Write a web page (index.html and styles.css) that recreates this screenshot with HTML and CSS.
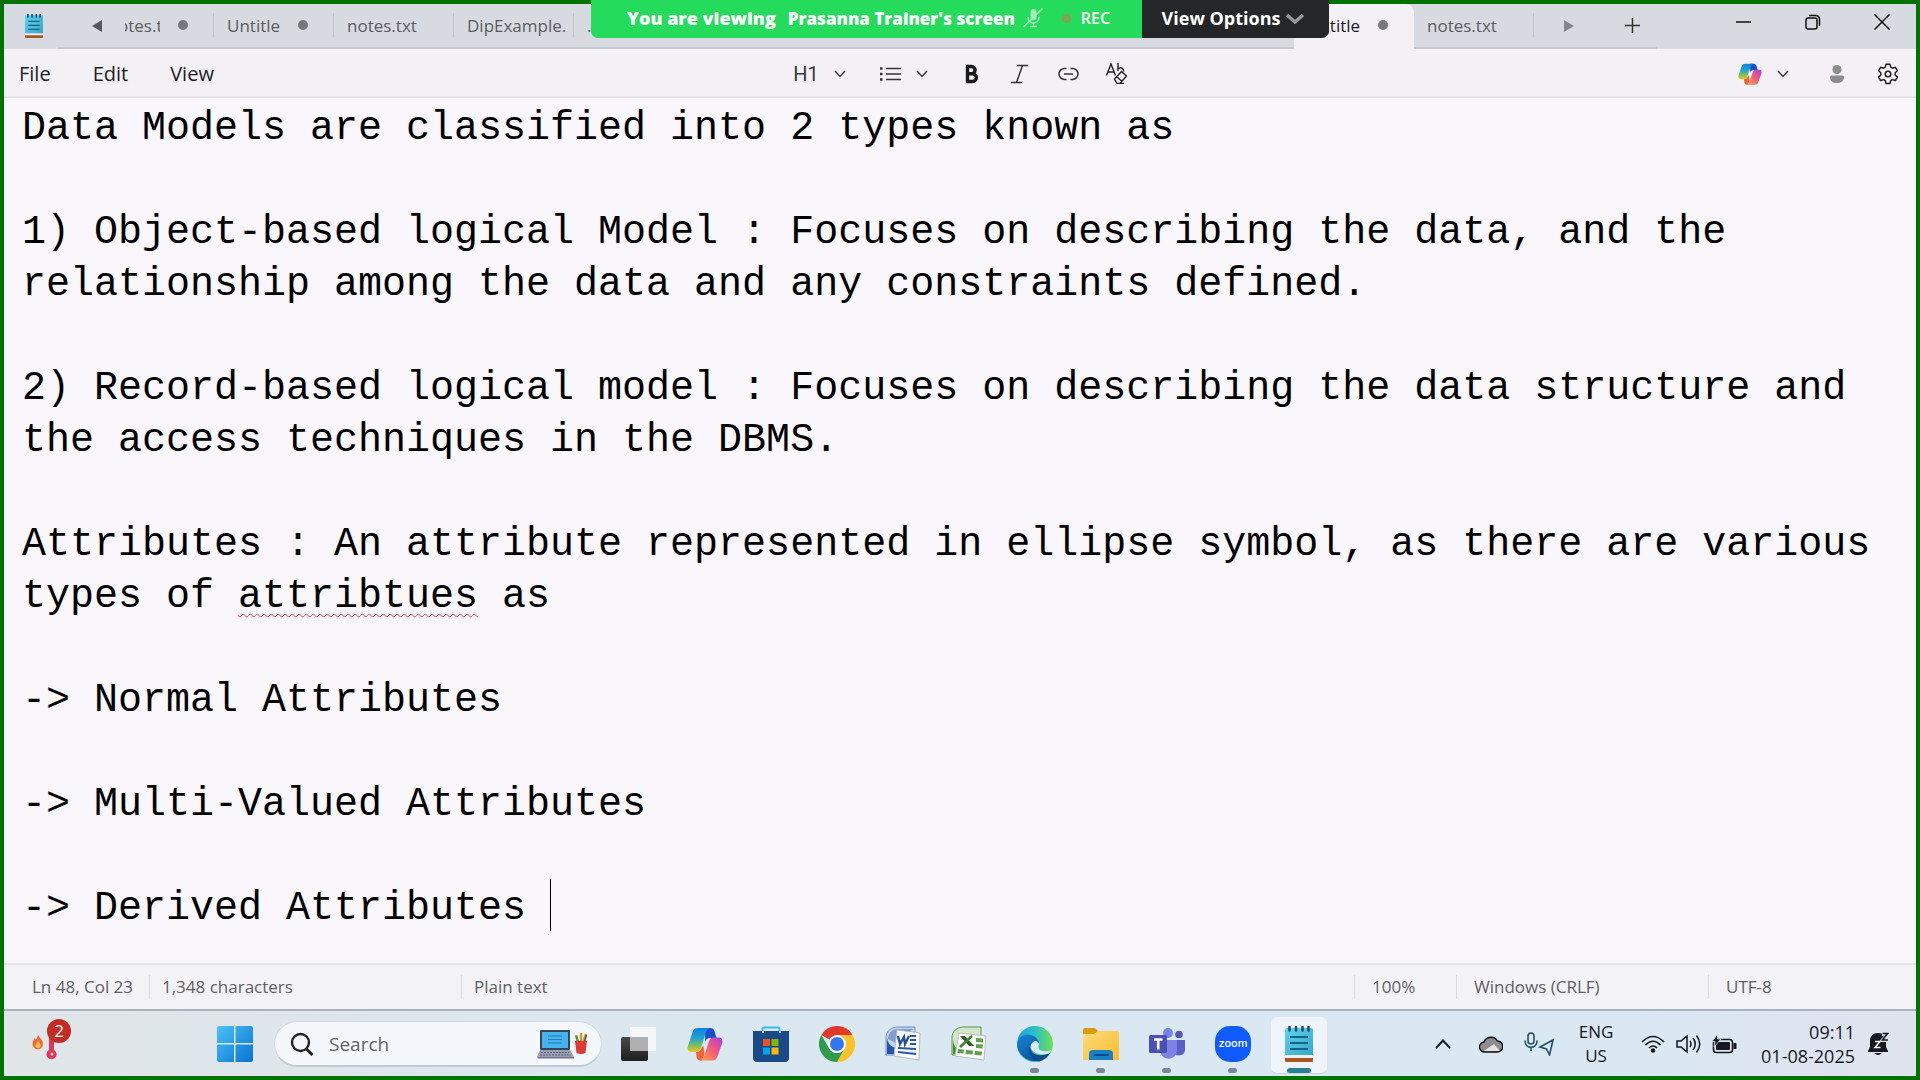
FILE: index.html
```html
<!DOCTYPE html>
<html lang="en">
<head>
<meta charset="utf-8">
<title>Untitled - Notepad</title>
<link rel="stylesheet" href="styles.css">
</head>
<body>
<svg class="defs" aria-hidden="true">
  <defs>
    <linearGradient id="cpA" x1="0" y1="0" x2="0" y2="1"><stop offset="0" stop-color="#0a84dc"/><stop offset=".4" stop-color="#22a0d8"/><stop offset=".7" stop-color="#6fbf62"/><stop offset="1" stop-color="#f0c71e"/></linearGradient>
    <linearGradient id="cpB" x1="1" y1="0" x2="0" y2="1"><stop offset="0" stop-color="#a53ee0"/><stop offset=".45" stop-color="#f0587f"/><stop offset="1" stop-color="#ffa04a"/></linearGradient>
    <linearGradient id="npG" x1="0" y1="0" x2="1" y2="1"><stop offset="0" stop-color="#5fd3ef"/><stop offset="1" stop-color="#38a5c6"/></linearGradient>
    <linearGradient id="winG" x1="0" y1="0" x2="1" y2="1"><stop offset="0" stop-color="#4cc2f8"/><stop offset="1" stop-color="#0672d2"/></linearGradient>
    <linearGradient id="edG" x1="0" y1="0" x2="1" y2="0"><stop offset="0" stop-color="#1f9fe0"/><stop offset=".5" stop-color="#2cc0c8"/><stop offset="1" stop-color="#6fe04a"/></linearGradient>
    <linearGradient id="edB" x1="0" y1="0" x2="1" y2="1"><stop offset="0" stop-color="#1388dc"/><stop offset="1" stop-color="#0c3f80"/></linearGradient>
    <linearGradient id="foG" x1="0" y1="0" x2="1" y2="1"><stop offset="0" stop-color="#ffdc7c"/><stop offset="1" stop-color="#fcbc2c"/></linearGradient>
    <linearGradient id="tvG" x1="0" y1="0" x2="0" y2="1"><stop offset="0" stop-color="#484848"/><stop offset="1" stop-color="#1e1e1e"/></linearGradient>
    <symbol id="chev" viewBox="0 0 12 8"><path d="M1 1l5 5.5L11 1" fill="none" stroke="currentColor" stroke-width="1.5"/></symbol>
    <symbol id="copilot" viewBox="0 0 36 34">
      <path d="M18 1h5.500c2 0 3.200 1 3.900 3l2.200 7h-6.500c-3 0-4 1.500-5 4z" fill="#1b4fd0"/>
      <path d="M10.500 1h12.500c-2.500.5-3.500 2.500-4.300 5l-5 16c-.8 2-2 3-4.500 3H4.500C1 25 0 22.500.8 19.500L5.500 5C6.400 2.300 8 1 10.500 1z" fill="url(#cpA)"/>
      <path d="M9 25c3.500 0 5-2 6-5l1.500-1 1 8-2.500 6.500h-1.500c-2 0-3.200-1-3.900-3z" fill="#f0643c"/>
      <path d="M25.500 33.500H13c2.500-.5 3.500-2.500 4.300-5l5-15c.8-2 2-3 4.500-3h4.700c3.500 0 4.500 2.500 3.700 5.500l-4.700 13.500c-.9 2.700-2.500 4-5 4z" fill="url(#cpB)"/>
    </symbol>
    <symbol id="notepad" viewBox="0 0 28 36">
      <path d="M0 4a2 2 0 0 1 2-2h24a2 2 0 0 1 2 2v26H0z" fill="url(#npG)"/>
      <path d="M0 29h28v3H0z" fill="#eef2f4"/><path d="M0 32h28v3a1 1 0 0 1-1 1H1a1 1 0 0 1-1-1z" fill="#a9561f"/>
      <path d="M5 11h18M5 17h18M5 23h18" stroke="#0f6787" stroke-width="2"/>
      <path d="M4.500 1v3.500M11 1v3.500M17.500 1v3.500M23.500 1v3.500" stroke="#16506c" stroke-width="2.600" stroke-linecap="round"/>
    </symbol>
  </defs>
</svg>

<div class="desktop">
  <header class="titlebar">
    <div class="app-mark"><svg width="18" height="24" viewBox="0 0 28 36" preserveAspectRatio="none"><use href="#notepad"/></svg></div>
    <nav class="strip" aria-label="Open files">
      <button class="scroll-left" aria-label="Scroll tabs left"><svg width="10" height="12" viewBox="0 0 10 12"><path d="M10 0v12L0 6z" fill="#56575c"/></svg></button>
      <div class="tabs">
        <button class="tab tab-cut"><span class="name name-tail">notes.txt</span><i class="dot"></i></button>
        <button class="tab"><span class="name name-short">Untitled</span><i class="dot"></i></button>
        <button class="tab"><span class="name">notes.txt</span></button>
        <button class="tab"><span class="name">DipExample.</span></button>
        <button class="tab"><span class="name">.</span></button>
        <button class="tab" aria-label="Tab 6"></button>
        <button class="tab" aria-label="Tab 7"></button>
        <button class="tab" aria-label="Tab 8"></button>
        <button class="tab" aria-label="Tab 9"></button>
        <button class="tab" aria-label="Tab 10"></button>
        <button class="tab tab-active"><span class="name name-short">Untitled</span><i class="dot"></i></button>
        <button class="tab"><span class="name">notes.txt</span></button>
      </div>
      <button class="scroll-right" aria-label="Scroll tabs right"><svg width="10" height="12" viewBox="0 0 10 12"><path d="M0 0l10 6L0 12z" fill="#85868b"/></svg></button>
      <button class="new-tab" aria-label="New tab"><svg width="15" height="15" viewBox="0 0 15 15"><path d="M7.500 0v15M0 7.500h15" stroke="#333" stroke-width="1.500"/></svg></button>
    </nav>
    <div class="controls">
      <button aria-label="Minimize"><svg width="16" height="16" viewBox="0 0 16 16"><path d="M0 8h15" stroke="#111" stroke-width="1.500"/></svg></button>
      <button aria-label="Restore"><svg width="16" height="16" viewBox="0 0 16 16" fill="none" stroke="#111" stroke-width="1.500"><rect x="1" y="4" width="11" height="11" rx="2"/><path d="M4 1.500h7a3.500 3.500 0 0 1 3.500 3.500v7"/></svg></button>
      <button aria-label="Close"><svg width="16" height="16" viewBox="0 0 16 16"><path d="M.5.500l15 15M15.500.5l-15 15" stroke="#111" stroke-width="1.500"/></svg></button>
    </div>
  </header>

  <div class="toolbar">
    <nav class="menu" aria-label="Menu"><button>File</button><button>Edit</button><button>View</button></nav>
    <div class="format">
      <button class="drop"><span class="heading">H1</span><svg width="12" height="8"><use href="#chev"/></svg></button>
      <button class="drop" aria-label="List"><svg width="21" height="14" viewBox="0 0 21 14"><path d="M6 1.500h15M6 7h15M6 12.500h15" stroke="#333" stroke-width="1.500"/><path d="M0 1.500h2.500M0 7h2.500M0 12.500h2.500" stroke="#333" stroke-width="2.500"/></svg><svg width="12" height="8"><use href="#chev"/></svg></button>
      <div class="styles">
        <button aria-label="Bold"><svg width="21" height="20" viewBox="0 0 21 20"><path d="M5.500 2.500h4a3.600 3.600 0 0 1 0 7.200h-4zM5.500 9.700h5a3.900 3.900 0 0 1 0 7.800h-5z" fill="none" stroke="#1a1a1a" stroke-width="3.400" stroke-linejoin="round"/></svg></button>
        <button aria-label="Italic"><svg width="21" height="20" viewBox="0 0 21 20"><path d="M7 1.500h11M1 18.500h11M12.500 1.500l-6 17" fill="none" stroke="#333" stroke-width="1.500"/></svg></button>
        <button aria-label="Link"><svg width="21" height="14" viewBox="0 0 21 14"><path d="M8.500 1.500h-2a5.500 5.500 0 0 0 0 11h2M12.500 1.500h2a5.500 5.500 0 0 1 0 11h-2M6 7h9" fill="none" stroke="#333" stroke-width="1.500"/></svg></button>
        <button aria-label="Clear formatting"><svg width="21" height="21" viewBox="0 0 21 21"><path d="M.5 12.500L5 1l4.500 11.500M2 9h6M12 0v8M12 6c3-3 6 0 5.500 2.500M8.500 16l7-7.500 5 4.500-6.500 7.500H11zM10.500 13.500l5 4.500M11 20.500h7" fill="none" stroke="#222" stroke-width="1.400"/></svg></button>
      </div>
    </div>
    <div class="account">
      <button class="drop-tight" aria-label="Copilot"><svg width="24" height="22" viewBox="0 0 36 34" preserveAspectRatio="none"><use href="#copilot"/></svg><svg width="12" height="8"><use href="#chev"/></svg></button>
      <button class="person" aria-label="Account"><svg width="14" height="18" viewBox="0 0 14 18"><circle cx="7" cy="4.500" r="4.500" fill="#8c8c8f"/><path d="M0 12a1.500 1.500 0 0 1 1.500-1.500h11A1.500 1.500 0 0 1 14 12c0 4-3 6-7 6s-7-2-7-6z" fill="#8c8c8f"/></svg></button>
      <button aria-label="Settings"><svg width="22" height="22" viewBox="0 0 22 22" fill="none" stroke="#222" stroke-width="1.500"><path d="M9 1.200h4l.7 3 1.800 1 2.900-.9 2 3.400-2.200 2.100v2.200l2.200 2.100-2 3.400-2.900-.9-1.800 1-.7 3H9l-.7-3-1.800-1-2.900.9-2-3.400 2.200-2.100V9.800L1.600 7.700l2-3.400 2.900.9 1.800-1z" stroke-linejoin="round"/><circle cx="11" cy="11" r="2.800"/></svg></button>
    </div>
  </div>

  <main class="editor" role="textbox" aria-multiline="true" aria-label="Text editor" contenteditable="true" spellcheck="false"><p>Data Models are classified into 2 types known as</p><p><br></p><p>1) Object-based logical Model : Focuses on describing the data, and the relationship among the data and any constraints defined.</p><p><br></p><p>2) Record-based logical model : Focuses on describing the data structure and the access techniques in the DBMS.</p><p><br></p><p>Attributes : An attribute represented in ellipse symbol, as there are various types of <span class="typo">attribtues</span> as</p><p><br></p><p>-&gt; Normal Attributes</p><p><br></p><p>-&gt; Multi-Valued Attributes</p><p><br></p><p>-&gt; Derived Attributes <span class="caret"></span></p></main>

  <footer class="status">
    <span class="cell cell-pos">Ln 48, Col 23</span>
    <span class="cell cell-count">1,348 characters</span>
    <span class="cell cell-kind">Plain text</span>
    <span class="cell cell-zoom">100%</span>
    <span class="cell cell-eol">Windows (CRLF)</span>
    <span class="cell cell-enc">UTF-8</span>
  </footer>

  <div class="taskbar">
    <button class="widgets" aria-label="Weather">
      <svg width="26" height="30" viewBox="0 0 26 30"><path d="M6 4c1 2 5 5 5 9a5 5 0 0 1-10.500 0c0-3 1.500-4 2-6l1.500 1.500C5 7 5.500 6 6 4z" fill="#ee6a35"/><path d="M6 10c2 2 2.500 3 2.500 4.500a2.500 2.500 0 0 1-5 0C3.500 13 5 12 6 10z" fill="#ffc04a"/><path d="M17 0h5v19a5 5 0 1 1-5 0z" fill="#df3558"/><circle cx="20" cy="23" r="1.500" fill="#ffc9d2"/></svg>
      <span class="badge">2</span>
    </button>
    <button class="start" aria-label="Start"><svg width="36" height="36" viewBox="0 0 36 36"><path d="M2 0h15v17H0V2a2 2 0 0 1 2-2zM18.500 0H34a2 2 0 0 1 2 2v15H18.500zM0 18.500h17V36H2a2 2 0 0 1-2-2zM18.500 18.500H36V34a2 2 0 0 1-2 2H18.500z" fill="url(#winG)"/></svg></button>
    <label class="search">
      <svg width="24" height="24" viewBox="0 0 24 24"><circle cx="10.500" cy="10.500" r="8.500" fill="none" stroke="#222" stroke-width="2.400"/><path d="M16.500 17l6 6" stroke="#222" stroke-width="3"/></svg>
      <input type="text" placeholder="Search" aria-label="Search">
      <svg width="50" height="30" viewBox="0 0 50 30"><rect x="3" y="1" width="30" height="20" rx="1" fill="#33475c"/><rect x="5" y="3" width="26" height="16" fill="#47b3ec"/><path d="M11 7h14M11 10.500h14M11 14h14" stroke="#1f7fbd" stroke-width="1.200"/><path d="M3 21h30l4 7H0z" fill="#9c9fb2"/><path d="M4 23.500h28M3 26h31" stroke="#60637a" stroke-width="1" stroke-dasharray="2 1"/><path d="M0 28h37v1.500H1z" fill="#6f7290"/><path d="M41 14l-2-8M44 14V4M46 14l3-9" stroke-width="2.400" stroke="#d29a2c"/><path d="M41 14l-1.500-7" stroke="#3a9b56" stroke-width="2"/><path d="M47 14l2.500-8" stroke="#4d5566" stroke-width="1.500"/><path d="M38 12h12l-1.500 12q-4.500 2-9 0z" fill="#dd3b34"/></svg>
    </label>
    <nav class="apps" aria-label="Apps">
      <button class="app" aria-label="Task view"><svg width="36" height="36" viewBox="0 0 36 36"><rect x="0" y="11" width="27" height="24" rx="2" fill="url(#tvG)"/><rect x="9" y="1" width="26" height="24" rx="1" fill="#f7f7f8" opacity=".9"/><path d="M9 11h18v14H9z" fill="#b0b0b0"/></svg></button>
      <button class="app" aria-label="Copilot"><svg width="36" height="34"><use href="#copilot"/></svg></button>
      <button class="app" aria-label="Microsoft Store"><svg width="36" height="36" viewBox="0 0 36 36"><path d="M9.500 7V3a1.500 1.500 0 0 1 1.500-1.500h14A1.500 1.500 0 0 1 26.500 3v4" fill="none" stroke="#3cb8e6" stroke-width="2"/><path d="M0 5h36v27a4 4 0 0 1-4 4H4a4 4 0 0 1-4-4z" fill="#174a86"/><path d="M9 6h2M26 6h2" stroke="#8de0f8" stroke-width="2"/><path d="M10 13h7v7h-7z" fill="#f25022"/><path d="M18.500 13h7v7h-7z" fill="#7fba00"/><path d="M10 21.500h7v7h-7z" fill="#00a4ef"/><path d="M18.500 21.500h7v7h-7z" fill="#ffb900"/></svg></button>
      <button class="app" aria-label="Chrome"><svg width="36" height="36" viewBox="0 0 36 36"><path d="M18 18L2.400 9A18 18 0 0 1 33.600 9z" fill="#e2382c"/><path d="M18 9h15.600A18 18 0 0 1 18 36l8-13.500z" fill="#fdc224"/><path d="M2.400 9l7.800 13.500a9 9 0 0 0 15.600 0L18 36A18 18 0 0 1 2.400 9z" fill="#2f9c4c"/><circle cx="18" cy="18" r="9" fill="#fff"/><circle cx="18" cy="18" r="7" fill="#3278ea"/></svg></button>
      <button class="app" aria-label="Word"><svg width="36" height="36" viewBox="0 0 36 36"><path d="M1 29V12C1 5 6 1 13 1h17v28z" fill="#c6d2e6" stroke="#6f8fc4"/><path d="M2 28V12q1 9 10 10l-3 6z" fill="#2756a8"/><path d="M3 13C3 6 8 3 14 3h14L11 17z" fill="#7f9dce"/><path d="M12 4l23 3-1 27-25-4z" fill="#fff" stroke="#b5bac4"/><path d="M13 10l2 8 4-7 1 7 4-8" fill="none" stroke="#2a4f9c" stroke-width="2.400"/><path d="M25 10h6M25 14h6M25 18h6M13 22l18 1M13 26l18 2" stroke="#2a56a8" stroke-width="2"/></svg></button>
      <button class="app" aria-label="Excel"><svg width="36" height="36" viewBox="0 0 36 36"><path d="M1 29V12C1 5 6 1 13 1h17v28z" fill="#d6e4cc" stroke="#5c9640"/><path d="M2 28V14q1 8 6 10l-3 4z" fill="#3a9134"/><path d="M8 7l27 3-2 24-29-4z" fill="#fff" stroke="#b5bfb2"/><path d="M25 12l7 .5v4l-7-.5zM25 18l7 .5-.5 4-6.500-.5zM24 25l7 .5-.5 4-7-.5zM15 24l7 .5-.5 4-7-.5zM7 23l6 .5-.5 4-6-.5z" fill="#5ea04e"/><path d="M9 10h5l9 10h-5z" fill="#285e20"/><path d="M21 10L9 21" stroke="#3f7f31" stroke-width="2.600"/></svg></button>
      <button class="app running" aria-label="Edge"><svg width="36" height="36" viewBox="0 0 36 36"><circle cx="18" cy="18" r="18" fill="url(#edG)"/><path d="M0 18C1 10 8 8 13 9c6 1 9 5 9 9-3-4-9-2-9 4 0 6 5 10 11 9 4 0 7-2 9-4A18 18 0 0 1 0 18z" fill="url(#edB)"/><path d="M13 20c0 8 8 12 20 7a18 18 0 0 1-11 8.500C14 34 10 26 13 20z" fill="#114a8c"/><path d="M14 19c2-5 7-5 8-1-1 3-1 6 4 7 3 .6 6 0 8-1l-1 3c-5 2-12 2-16-1q-4-3-3-7z" fill="#dce9f3"/></svg></button>
      <button class="app running" aria-label="File Explorer"><svg width="36" height="36" viewBox="0 0 36 36"><path d="M0 4a2 2 0 0 1 2-2h10l4 4-4 4H0z" fill="#dc9a10"/><path d="M0 8h11l4-3h19a2 2 0 0 1 2 2v27H0z" fill="url(#foG)"/><path d="M6 34v-6a4 4 0 0 1 4-4h16a4 4 0 0 1 4 4v6z" fill="#1b7fc4"/><path d="M12 29h13" stroke="#0c4c84" stroke-width="2" stroke-linecap="round"/></svg></button>
      <button class="app running" aria-label="Teams"><svg width="36" height="36" viewBox="0 0 36 36"><circle cx="19" cy="7" r="5" fill="#7a80ea"/><circle cx="30" cy="8.500" r="3.800" fill="#5157bd"/><path d="M26 14h10v10a6 6 0 0 1-10 4z" fill="#5a5fc6"/><path d="M12 14h16v11a8.500 8.500 0 0 1-16 3z" fill="#7d82e4"/><rect x="0" y="9" width="18" height="18" rx="1.500" fill="#4a50b4"/><path d="M5 13.500h8.500M9.200 13.500v10" stroke="#fff" stroke-width="2.600"/></svg></button>
      <button class="app running" aria-label="Zoom"><span class="zoom-mark">zoom</span></button>
      <button class="app running current" aria-label="Notepad"><svg width="28" height="36"><use href="#notepad"/></svg></button>
    </nav>
    <div class="tray">
      <button class="tray-item" aria-label="Show hidden icons"><svg width="16" height="10" viewBox="0 0 16 10"><path d="M1 9l7-7.500L15 9" fill="none" stroke="#1a1f26" stroke-width="2"/></svg></button>
      <button class="tray-item" aria-label="OneDrive"><svg width="24" height="18" viewBox="0 0 24 18"><path d="M6 17a5 5 0 0 1-1-10 7.500 7.500 0 0 1 13.500-1A5.500 5.500 0 0 1 18 17z" fill="#8d8d90"/><path d="M4 16.500L15 9l6 7z" fill="#e3e3e5"/><path d="M6 17a5 5 0 0 1-1-10 7.500 7.500 0 0 1 13.500-1A5.500 5.500 0 0 1 18 17z" fill="none" stroke="#111" stroke-width="1.400"/></svg></button>
      <button class="tray-item" aria-label="Microphone and location in use"><svg width="30" height="24" viewBox="0 0 30 24" fill="none" stroke="#225163" stroke-width="1.600"><rect x="4" y="1" width="6" height="11" rx="3"/><path d="M1 8.500c0 9 12 9 12 0M7 15.500V19M16 15l13-7-3.500 15-3-6z"/></svg></button>
      <button class="lang">ENG<br>US</button>
      <button class="signals" aria-label="Network, volume, battery">
        <svg width="24" height="18" viewBox="0 0 24 18" fill="none" stroke="#15191f" stroke-width="1.600"><path d="M1 7q11-11 22 0M4.500 10q7.500-7.500 15 0M8 13q4-4 8 0"/><circle cx="12" cy="15.500" r="1.500" fill="#15191f"/></svg>
        <svg width="25" height="20" viewBox="0 0 25 20" fill="none" stroke="#15191f" stroke-width="1.500"><path d="M1 7v6h4l6 5V2L5 7zM14 7q2 3 0 6M17 4q4.500 6 0 12M20.500 1.500q6.500 8.500 0 17"/></svg>
        <svg width="25" height="20" viewBox="0 0 25 20"><rect x="1.500" y="5.500" width="19" height="13" rx="3" fill="none" stroke="#15191f" stroke-width="1.600"/><rect x="4" y="8" width="14" height="8" rx="1" fill="#15191f"/><path d="M21.500 9h2a1 1 0 0 1 1 1v4a1 1 0 0 1-1 1h-2z" fill="#15191f"/><path d="M5.500 0L0 7.500h3L2 13l7-8H5.500z" fill="#15191f" stroke="#dbe8f2" stroke-width=".8"/></svg>
      </button>
      <button class="clock">09:11<br>01-08-2025</button>
      <button class="bell" aria-label="Do not disturb"><svg width="22" height="24" viewBox="0 0 22 24"><path d="M10 1c5 0 8 3.500 8 8v6l2 4v1H0v-1l2-4V9c0-4.500 3-8 8-8z" fill="#15191f"/><path d="M6 21h8q-4 4-8 0z" fill="#15191f"/><path d="M7 9.500h5l-5 6h5.500" fill="none" stroke="#fff" stroke-width="1.500"/><path d="M14 2h6l-5 6h6" fill="none" stroke="#dde6f1" stroke-width="4"/><path d="M14.500 1.500h5l-5 6.500H20" fill="none" stroke="#15191f" stroke-width="1.600"/></svg></button>
    </div>
  </div>

  <div class="share">
    <div class="share-info"><strong>You are viewing</strong><strong class="sharer">Prasanna Trainer's screen</strong>
      <svg width="20" height="20" viewBox="0 0 20 20" fill="none" stroke="#a2efb9" stroke-width="1.600"><rect x="7.500" y="1" width="6" height="11" rx="3" fill="#a2efb9" stroke="none"/><path d="M5 9c0 8 11 8 11 0M10.500 15v3.500M7 18.500h7M19.500.5L.5 19"/></svg>
      <i class="rec-dot"></i><span class="rec">REC</span></div>
    <button class="share-options">View Options<svg width="20" height="11" viewBox="0 0 20 11"><path d="M2 2l8 7 8-7" fill="none" stroke="#97989a" stroke-width="3.500"/></svg></button>
  </div>
</div>
</body>
</html>
```
FILE: styles.css
```css
* { box-sizing: border-box; }
body { margin: 0; font: 17px "Open Sans", "Liberation Sans", sans-serif; color: #1c1c1e; }
button { margin: 0; padding: 0; border: 0; background: none; color: inherit; font: inherit; display: flex; align-items: center; justify-content: center; flex: none; }
svg { flex: none; display: block; }
.defs { position: absolute; width: 0; height: 0; }
.desktop { position: relative; display: flex; flex-direction: column; min-height: 100vh; border: 4px solid #007200; background: #f9f7fb; }

.titlebar { display: flex; height: 45px; background: #d8dae2; color: #5b5c61; }
.app-mark { width: 54px; display: flex; align-items: center; justify-content: center; padding: 0 0 2px 6px; }
.strip { flex: 1; min-width: 0; display: flex; border-bottom: 2px solid #c8cad1; }
.scroll-left { width: 60px; padding-left: 17px; }
.scroll-right { width: 70px; }
.new-tab { width: 53px; padding-left: 3px; }
.tabs { flex: 1; min-width: 0; display: flex; }
.tab { position: relative; flex: 1 1 120px; min-width: 0; justify-content: flex-start; padding: 0 6px 0 13px; }
.tab::after { content: ""; position: absolute; right: 0; top: 9px; width: 1px; height: 24px; background: #c2c4cb; }
.tab-cut { flex: 0 0 96px; padding-left: 7px; }
.name { overflow: hidden; white-space: nowrap; line-height: 24px; }
.name-short { width: 53px; }
.name-tail { width: 35px; display: flex; justify-content: center; }
.dot { position: absolute; right: 26px; top: 16px; width: 10px; height: 10px; border-radius: 50%; background: #77787d; }
.tab-active { background: #f3f1f6; color: #1c1c1e; margin-bottom: -2px; padding-bottom: 2px; border-radius: 0 8px 0 0; }
.tab-active::after { display: none; }
.controls { display: flex; margin-left: 52px; padding-bottom: 9px; }
.controls button { width: 69px; }

.toolbar { display: grid; grid-template-columns: 1fr auto 1fr; height: 49px; padding-top: 2px; background: #f3f1f6; border-bottom: 2px solid #e6e4e9; color: #3a3a3d; }
.menu { display: flex; gap: 42px; padding-left: 15px; font-size: 20px; color: #1c1c1e; }
.format { display: flex; gap: 34px; }
.drop { gap: 15px; }
.heading { font: 20px Roboto, "Liberation Sans", sans-serif; }
.styles { display: flex; gap: 27px; }
.account { display: flex; justify-content: flex-end; padding-right: 17px; }
.drop-tight { gap: 15px; margin-right: 41px; }
.person { margin-right: 33px; }

.editor { flex: 1; padding: 5px 18px 16px; outline: 0; font: 40px/52px "Liberation Mono", "DejaVu Sans Mono", monospace; color: #000; white-space: pre-wrap; }
.editor p { margin: 0; }
.typo { text-decoration: underline wavy #f0343c 1px; text-underline-offset: 6px; text-decoration-skip-ink: none; }
.caret { display: inline-block; width: 1px; height: 52px; margin-top: -5px; vertical-align: -12px; background: #000; }

.status { display: flex; height: 46px; padding-left: 28px; align-items: center; background: #f3f3f5; border-top: 2px solid #e4e4e8; color: #606064; }
.cell { line-height: 24px; white-space: nowrap; }
.cell + .cell { border-left: 1px solid #dcdce0; padding-left: 12px; }
.cell-pos { width: 117px; }
.cell-count { width: 312px; }
.cell-kind { flex: 1; }
.status .cell-zoom { width: 102px; padding-left: 17px; }
.status .cell-eol { width: 252px; padding-left: 17px; }
.status .cell-enc { width: 208px; padding-left: 17px; }

.taskbar { display: flex; height: 67px; border-top: 2px solid #abb4be; background: linear-gradient(90deg, #e0e5e8 0, #dde7ee 25%, #d9e8f2 50%, #dae8f3 85%, #e0e3ee 100%); }
.widgets { position: relative; width: 88px; justify-content: flex-start; padding: 4px 0 0 28px; }
.badge { position: absolute; left: 43px; top: 8px; width: 24px; height: 24px; border-radius: 50%; background: #c42b23; color: #fff; font-size: 17px; line-height: 24px; text-align: center; }
.start { width: 56px; margin-left: 115px; }
.search { display: flex; align-items: center; width: 328px; height: 46px; margin: 10px 4px 0 11px; padding: 0 14px 0 15px; border-radius: 23px; background: #f4f8fc; border: 1px solid #d3dae2; border-bottom: 2px solid #c3cad2; }
.search input { flex: 1; min-width: 0; margin: 0; padding: 0 0 0 15px; border: 0; outline: 0; background: none; font: 19px "Open Sans", "Liberation Sans", sans-serif; color: #55585c; }
.search input::placeholder { color: #606366; opacity: 1; }
.apps { display: flex; }
.app { position: relative; width: 66px; }
.app svg, .zoom-mark { position: relative; }
.running::after { content: ""; position: absolute; bottom: 3px; left: 28px; width: 9px; height: 5px; border-radius: 3px; background: #7b8690; }
.current::before { content: ""; position: absolute; left: 5px; top: 6px; width: 56px; height: 56px; border-radius: 6px; background: #eef4fa; border-bottom: 1px solid #ccd5dd; }
.current::after { left: 21px; width: 24px; background: #2c7f93; }
.zoom-mark { width: 36px; height: 36px; border-radius: 15px; background: #0f5bff; color: #fff; font: 500 11px/34px Inter, sans-serif; text-align: center; }
.tray { display: flex; margin-left: auto; padding-right: 26px; color: #15191f; }
.tray-item { width: 48px; }
.lang { width: 66px; line-height: 24px; }
.signals { gap: 11px; margin-left: 12px; }
.clock { font-size: 18px; line-height: 24px; text-align: right; margin-left: 24px; }
.bell { margin-left: 13px; }

.share { position: absolute; top: -4px; left: 50%; transform: translateX(-50%); display: flex; height: 38px; width: 738px; border-radius: 0 0 7px 7px; overflow: hidden; color: #fff; font-size: 18px; font-weight: 700; white-space: nowrap; }
.share-info { flex: 1; display: flex; align-items: center; padding: 0 0 2px 36px; background: #24db5b; }
.share-info strong { margin-right: 12px; }
.share-info .sharer { margin-right: 8px; font-size: 17px; }
.rec-dot { width: 9px; height: 9px; margin: 0 10px 0 19px; border-radius: 50%; background: #7fa552; }
.rec { font-size: 16px; font-weight: 600; }
.share-options { width: 187px; gap: 5px; padding: 0 4px 2px 0; background: #242628; }
```
